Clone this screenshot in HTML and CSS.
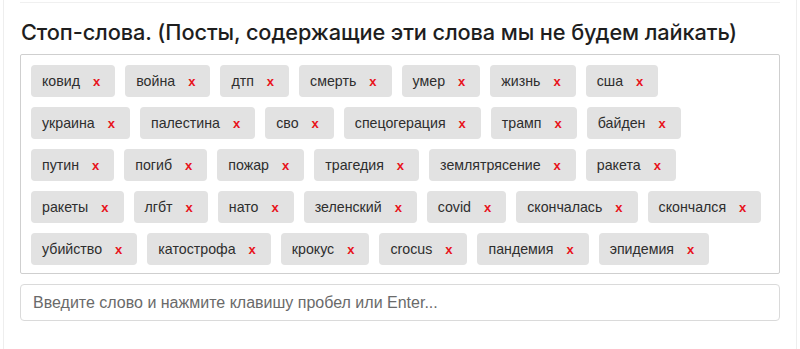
FILE: index.html
```html
<!DOCTYPE html>
<html lang="ru">
<head>
<meta charset="utf-8">
<link rel="stylesheet" href="styles.css">
</head>
<body>
<div class="card">
  <div class="topline"></div>
  <h2 class="title">Стоп-слова. (Посты, содержащие эти слова мы не будем лайкать)</h2>
  <div class="tags">
    <div class="row">
      <span class="tag">ковид<span class="x">x</span></span>
      <span class="tag">война<span class="x">x</span></span>
      <span class="tag">дтп<span class="x">x</span></span>
      <span class="tag">смерть<span class="x">x</span></span>
      <span class="tag">умер<span class="x">x</span></span>
      <span class="tag">жизнь<span class="x">x</span></span>
      <span class="tag">сша<span class="x">x</span></span>
    </div>
    <div class="row">
      <span class="tag">украина<span class="x">x</span></span>
      <span class="tag">палестина<span class="x">x</span></span>
      <span class="tag">сво<span class="x">x</span></span>
      <span class="tag">спецогерация<span class="x">x</span></span>
      <span class="tag">трамп<span class="x">x</span></span>
      <span class="tag">байден<span class="x">x</span></span>
    </div>
    <div class="row">
      <span class="tag">путин<span class="x">x</span></span>
      <span class="tag">погиб<span class="x">x</span></span>
      <span class="tag">пожар<span class="x">x</span></span>
      <span class="tag">трагедия<span class="x">x</span></span>
      <span class="tag">землятрясение<span class="x">x</span></span>
      <span class="tag">ракета<span class="x">x</span></span>
    </div>
    <div class="row">
      <span class="tag">ракеты<span class="x">x</span></span>
      <span class="tag">лгбт<span class="x">x</span></span>
      <span class="tag">нато<span class="x">x</span></span>
      <span class="tag">зеленский<span class="x">x</span></span>
      <span class="tag">covid<span class="x">x</span></span>
      <span class="tag">скончалась<span class="x">x</span></span>
      <span class="tag">скончался<span class="x">x</span></span>
    </div>
    <div class="row">
      <span class="tag">убийство<span class="x">x</span></span>
      <span class="tag">катострофа<span class="x">x</span></span>
      <span class="tag">крокус<span class="x">x</span></span>
      <span class="tag">crocus<span class="x">x</span></span>
      <span class="tag">пандемия<span class="x">x</span></span>
      <span class="tag">эпидемия<span class="x">x</span></span>
    </div>
  </div>
  <input class="field" type="text" placeholder="Введите слово и нажмите клавишу пробел или Enter...">
</div>
</body>
</html>
```

FILE: styles.css
```css
html, body {
  margin: 0;
  padding: 0;
  background: #ffffff;
}

.card {
  margin: 0 3px;
  height: 349px;
  box-sizing: border-box;
  border-left: 1px solid #eeeeee;
  border-right: 1px solid #eeeeee;
  padding: 0 16px;
}

.topline {
  height: 2px;
  border-bottom: 1px solid #f0f0f0;
}

.title {
  margin: 15px 0 0 1px;
  font-family: "Inter", "Liberation Sans", sans-serif;
  font-weight: 500;
  font-size: 21.75px;
  line-height: 28px;
  color: #1e1e1e;
  letter-spacing: -0.1px;
}

.tags {
  margin-top: 8px;
  border: 1px solid #cfcfcf;
  border-radius: 2px;
  padding: 10px 10px 8px 10px;
  display: flex;
  flex-direction: column;
  gap: 10px;
}

.row {
  display: flex;
  gap: 10px;
}

.tag {
  display: inline-flex;
  align-items: center;
  height: 32px;
  box-sizing: border-box;
  padding: 0 15px 0 11px;
  background: #e2e2e2;
  border-radius: 4px;
  font-family: "Liberation Sans", Arial, sans-serif;
  font-size: 14.2px;
  color: #2e2e2e;
}

.x {
  margin-left: 13px;
  color: #e8141c;
  font-weight: 700;
  font-size: 13px;
}

.field {
  display: block;
  margin-top: 10px;
  width: 100%;
  height: 37px;
  box-sizing: border-box;
  border: 1px solid #dadada;
  border-radius: 4px;
  padding: 0 12px;
  font-family: "Liberation Sans", Arial, sans-serif;
  font-size: 16px;
  color: #333;
  outline: none;
}

.field::placeholder {
  color: #6a6a6a;
}
```
